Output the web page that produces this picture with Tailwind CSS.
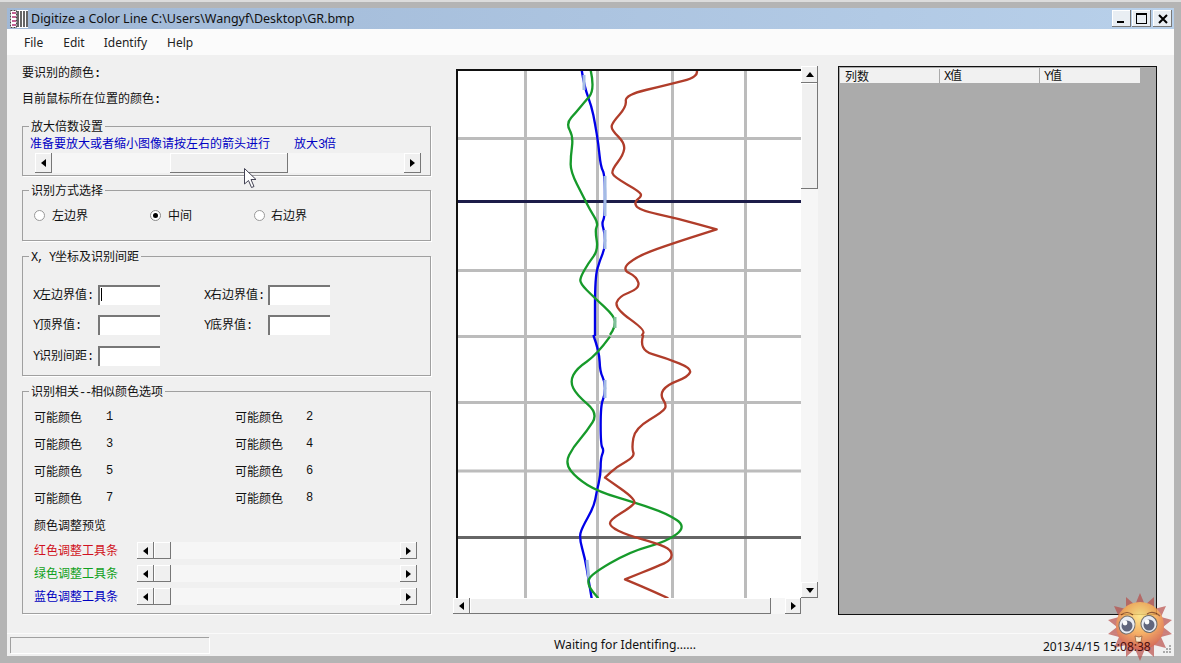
<!DOCTYPE html>
<html>
<head>
<meta charset="utf-8">
<script src="https://cdn.jsdelivr.net/npm/@tailwindcss/browser@4"></script>
</head>
<body class="overflow-hidden">
<div class="relative w-[1181px] h-[663px] bg-[#b4b4b4] border-t-2 border-[#dcdcdc] pt-[6px] pb-[7px] px-[7px] flex flex-col font-['Noto_Sans_CJK_SC',sans-serif] text-[12px] leading-[14px] text-[#111]">

  <!-- title bar -->
  <div class="h-[21px] shrink-0 bg-gradient-to-r from-[#a0b8d6] to-[#b8d0ea] flex items-center pl-[3px] pr-[2px]">
    <svg width="18" height="18" viewBox="0 0 18 18" class="bg-white shrink-0">
      <rect x="0.5" y="0.5" width="6" height="17" fill="#fff" stroke="#444" stroke-dasharray="2 1"/>
      <path d="M2 3h4M2 7h4M2 11h4M2 15h4" stroke="#b03070" stroke-width="1.4"/>
      <path d="M8 1v16M11 1v16M14 1v16M17 1v16" stroke="#000" stroke-width="1.2"/>
    </svg>
    <span class="ml-[3px] font-['Noto_Sans',sans-serif] text-[12.5px] text-[#111]">Digitize a Color Line C:\Users\Wangyf\Desktop\GR.bmp</span>
    <div class="ml-auto flex gap-[1px]">
      <div class="w-[19px] h-[17px] bg-[#e9eef3] shadow-[inset_-1px_-1px_0_#777,inset_1px_1px_0_#fff] flex items-center justify-center pt-[6px] pr-[2px]"><div class="w-[7px] h-[2px] bg-black"></div></div>
      <div class="w-[19px] h-[17px] bg-[#e9eef3] shadow-[inset_-1px_-1px_0_#777,inset_1px_1px_0_#fff] flex items-center justify-center pr-[1px]"><div class="w-[11px] h-[11px] border border-black border-t-2"></div></div>
      <div class="w-[19px] h-[17px] ml-[1px] bg-[#e9eef3] shadow-[inset_-1px_-1px_0_#777,inset_1px_1px_0_#fff] flex items-center justify-center"><svg width="10" height="10" viewBox="0 0 10 10"><path d="M1 1l8 8M9 1l-8 8" stroke="#000" stroke-width="2"/></svg></div>
    </div>
  </div>

  <!-- menu -->
  <div class="h-[26px] shrink-0 bg-[#fbfbfb] flex items-center pt-[2px] font-['Noto_Sans',sans-serif] text-[12px] text-[#222]">
    <span class="ml-[17px]">File</span><span class="ml-[20px]">Edit</span><span class="ml-[19px]">Identify</span><span class="ml-[20px]">Help</span>
  </div>

  <!-- main -->
  <div class="flex-1 bg-[#f0f0f0] flex">

    <!-- left column -->
    <div class="w-[424px] pl-[15px] pt-[10px] shrink-0">
      <div class="h-[14px]">要识别的颜色<span class="font-['Liberation_Mono',monospace] text-[12px] tracking-[-1.2px] font-bold">:</span></div>
      <div class="h-[14px] mt-[12px]">目前鼠标所在位置的颜色<span class="font-['Liberation_Mono',monospace] text-[12px] tracking-[-1.2px] font-bold">:</span></div>

      <!-- box 1 -->
      <div class="relative mt-[21px] h-[50px] border border-[#a0a0a0] shadow-[1px_1px_0_#fff]">
        <div class="absolute left-[6px] top-[-8px] px-[2px] bg-[#f0f0f0]">放大倍数设置</div>
        <div class="flex pl-[7px] pt-[9px] h-[26px] text-[#0000c4]"><span class="w-[264px]">准备要放大或者缩小图像请按左右的箭头进行</span><span>放大<span class="font-['Liberation_Mono',monospace] text-[12px] tracking-[-1.2px]">3</span>倍</span></div>
        <div class="flex ml-[12px] w-[386px] h-[20px] bg-[#f6f6f6]">
          <div class="w-[17px] bg-[#f0f0f0] shadow-[inset_-1px_-1px_0_#777,inset_1px_1px_0_#fff] flex items-center justify-center"><svg width="5" height="8"><path d="M5 0v8L0 4z" fill="#000"/></svg></div>
          <div class="w-[118px] ml-[118px] bg-[#f0f0f0] shadow-[inset_-1px_-1px_0_#777,inset_1px_1px_0_#fff]"></div>
          <div class="w-[17px] ml-auto bg-[#f0f0f0] shadow-[inset_-1px_-1px_0_#777,inset_1px_1px_0_#fff] flex items-center justify-center"><svg width="5" height="8"><path d="M0 0v8L5 4z" fill="#000"/></svg></div>
        </div>
      </div>

      <!-- box 2 -->
      <div class="relative mt-[14px] h-[51px] border border-[#a0a0a0] shadow-[1px_1px_0_#fff]">
        <div class="absolute left-[6px] top-[-8px] px-[2px] bg-[#f0f0f0]">识别方式选择</div>
        <div class="flex items-center h-[14px] mt-[17px] pl-[11px]">
          <div class="w-[11px] h-[11px] rounded-full bg-white border border-[#999] shrink-0"></div>
          <span class="ml-[7px] w-[98px]">左边界</span>
          <div class="w-[11px] h-[11px] rounded-full bg-white border border-[#888] flex items-center justify-center shrink-0"><div class="w-[5px] h-[5px] rounded-full bg-black"></div></div>
          <span class="ml-[7px] w-[86px]">中间</span>
          <div class="w-[11px] h-[11px] rounded-full bg-white border border-[#999] shrink-0"></div>
          <span class="ml-[6px]">右边界</span>
        </div>
      </div>

      <!-- box 3 -->
      <div class="relative mt-[15px] h-[120px] border border-[#a0a0a0] shadow-[1px_1px_0_#fff]">
        <div class="absolute left-[6px] top-[-8px] px-[2px] bg-[#f0f0f0]"><span class="font-['Liberation_Mono',monospace] text-[12px] tracking-[-1.2px]">X, Y</span>坐标及识别间距</div>
        <div class="grid grid-cols-[65px_62px_44px_64px_62px] pl-[10px] pt-[28px] items-center auto-rows-[20px] gap-y-[10px]">
          <span><span class="font-['Liberation_Mono',monospace] text-[12px] tracking-[-1.2px]">X</span>左边界值<span class="font-['Liberation_Mono',monospace] text-[12px] tracking-[-1.2px]">:</span></span>
          <div class="relative h-[20px] bg-white border-t-2 border-l-2 border-t-[#777] border-l-[#777]"><div class="absolute left-[1px] top-[1px] w-[1px] h-[13px] bg-black"></div></div>
          <span></span>
          <span><span class="font-['Liberation_Mono',monospace] text-[12px] tracking-[-1.2px]">X</span>右边界值<span class="font-['Liberation_Mono',monospace] text-[12px] tracking-[-1.2px]">:</span></span>
          <div class="h-[20px] bg-white border-t-2 border-l-2 border-t-[#777] border-l-[#777]"></div>

          <span><span class="font-['Liberation_Mono',monospace] text-[12px] tracking-[-1.2px]">Y</span>顶界值<span class="font-['Liberation_Mono',monospace] text-[12px] tracking-[-1.2px]">:</span></span>
          <div class="h-[20px] bg-white border-t-2 border-l-2 border-t-[#777] border-l-[#777]"></div>
          <span></span>
          <span><span class="font-['Liberation_Mono',monospace] text-[12px] tracking-[-1.2px]">Y</span>底界值<span class="font-['Liberation_Mono',monospace] text-[12px] tracking-[-1.2px]">:</span></span>
          <div class="h-[20px] bg-white border-t-2 border-l-2 border-t-[#777] border-l-[#777]"></div>

          <span class="mt-[1px]"><span class="font-['Liberation_Mono',monospace] text-[12px] tracking-[-1.2px]">Y</span>识别间距<span class="font-['Liberation_Mono',monospace] text-[12px] tracking-[-1.2px]">:</span></span>
          <div class="h-[20px] mt-[1px] bg-white border-t-2 border-l-2 border-t-[#777] border-l-[#777]"></div>
        </div>
      </div>

      <!-- box 4 -->
      <div class="relative mt-[15px] h-[223px] border border-[#a0a0a0] shadow-[1px_1px_0_#fff]">
        <div class="absolute left-[6px] top-[-8px] px-[2px] bg-[#f0f0f0]">识别相关<span class="font-['Liberation_Mono',monospace] text-[12px] tracking-[-1.2px]">--</span>相似颜色选项</div>
        <div class="grid grid-cols-[72px_129px_71px_1fr] pl-[11px] pt-[18px] auto-rows-[14px] gap-y-[13px] items-center">
          <span>可能颜色</span><span class="font-['Liberation_Mono',monospace] text-[12px]">1</span><span>可能颜色</span><span class="font-['Liberation_Mono',monospace] text-[12px]">2</span>
          <span>可能颜色</span><span class="font-['Liberation_Mono',monospace] text-[12px]">3</span><span>可能颜色</span><span class="font-['Liberation_Mono',monospace] text-[12px]">4</span>
          <span>可能颜色</span><span class="font-['Liberation_Mono',monospace] text-[12px]">5</span><span>可能颜色</span><span class="font-['Liberation_Mono',monospace] text-[12px]">6</span>
          <span>可能颜色</span><span class="font-['Liberation_Mono',monospace] text-[12px]">7</span><span>可能颜色</span><span class="font-['Liberation_Mono',monospace] text-[12px]">8</span>
          <span class="col-span-4">颜色调整预览</span>
        </div>
        <div class="flex flex-col gap-[6px] pl-[11px] mt-[10px]">
          <div class="flex items-center h-[17px]"><span class="w-[103px] pb-[2px] text-[#d01020]">红色调整工具条</span>
            <div class="flex w-[280px] h-[17px] bg-[#f6f6f6]">
              <div class="w-[17px] bg-[#f0f0f0] shadow-[inset_-1px_-1px_0_#777,inset_1px_1px_0_#fff] flex items-center justify-center"><svg width="5" height="8"><path d="M5 0v8L0 4z" fill="#000"/></svg></div>
              <div class="w-[17px] bg-[#f0f0f0] shadow-[inset_-1px_-1px_0_#777,inset_1px_1px_0_#fff]"></div>
              <div class="w-[17px] ml-auto bg-[#f0f0f0] shadow-[inset_-1px_-1px_0_#777,inset_1px_1px_0_#fff] flex items-center justify-center"><svg width="5" height="8"><path d="M0 0v8L5 4z" fill="#000"/></svg></div>
            </div>
          </div>
          <div class="flex items-center h-[17px]"><span class="w-[103px] pb-[2px] text-[#10a020]">绿色调整工具条</span>
            <div class="flex w-[280px] h-[17px] bg-[#f6f6f6]">
              <div class="w-[17px] bg-[#f0f0f0] shadow-[inset_-1px_-1px_0_#777,inset_1px_1px_0_#fff] flex items-center justify-center"><svg width="5" height="8"><path d="M5 0v8L0 4z" fill="#000"/></svg></div>
              <div class="w-[17px] bg-[#f0f0f0] shadow-[inset_-1px_-1px_0_#777,inset_1px_1px_0_#fff]"></div>
              <div class="w-[17px] ml-auto bg-[#f0f0f0] shadow-[inset_-1px_-1px_0_#777,inset_1px_1px_0_#fff] flex items-center justify-center"><svg width="5" height="8"><path d="M0 0v8L5 4z" fill="#000"/></svg></div>
            </div>
          </div>
          <div class="flex items-center h-[17px]"><span class="w-[103px] pb-[2px] text-[#0000c0]">蓝色调整工具条</span>
            <div class="flex w-[280px] h-[17px] bg-[#f6f6f6]">
              <div class="w-[17px] bg-[#f0f0f0] shadow-[inset_-1px_-1px_0_#777,inset_1px_1px_0_#fff] flex items-center justify-center"><svg width="5" height="8"><path d="M5 0v8L0 4z" fill="#000"/></svg></div>
              <div class="w-[17px] bg-[#f0f0f0] shadow-[inset_-1px_-1px_0_#777,inset_1px_1px_0_#fff]"></div>
              <div class="w-[17px] ml-auto bg-[#f0f0f0] shadow-[inset_-1px_-1px_0_#777,inset_1px_1px_0_#fff] flex items-center justify-center"><svg width="5" height="8"><path d="M0 0v8L5 4z" fill="#000"/></svg></div>
            </div>
          </div>
        </div>
      </div>
    </div>

    <!-- chart column -->
    <div class="ml-[22px] w-[365px] shrink-0 pt-[11px]">
      <div class="flex h-[532px]">
        <div class="w-[348px] pl-[3px] pt-[3px]">
          <svg width="345" height="529" viewBox="456 69 345 529" class="block bg-white">
            <defs>
              <filter id="soft" filterUnits="userSpaceOnUse" x="440" y="50" width="380" height="570"><feGaussianBlur stdDeviation="0.65"/></filter>
            </defs>
            <g filter="url(#soft)" fill="none">
              <path d="M525.5 69V598M597.5 69V598M672.5 69V598M745.5 69V598" stroke="#bcbcbc" stroke-width="3"/>
              <path d="M456 138.5H801M456 270.5H801M456 336.5H801M456 402.5H801M456 471H801" stroke="#bcbcbc" stroke-width="3"/>
              <path d="M456 201.5H801" stroke="#1c1c48" stroke-width="3"/>
              <path d="M456 537.5H801" stroke="#666" stroke-width="3"/>
              <g stroke="#0505e8" stroke-width="7" stroke-linejoin="round">
                <path transform="translate(450 60) scale(.3333)" data-pts="395,30 403,80 425,140 435,190 445,250 452,320 465,345 465,470 455,490 465,520 465,565 450,600 435,650 435,828"/>
                <path transform="translate(450 335) scale(.3333)" data-pts="430,0 448,50 450,110 465,140 465,180 452,210 452,330 462,345 452,370 452,420 440,470 432,515 395,580 388,610 405,670 415,730 425,790"/>
              </g>
              <g stroke="#a4bce4" stroke-width="3">
                <path d="M584 75V90M605 176V216M605 230V249M605 380V398M587 560L589 580"/>
              </g>
              <g stroke="#189a2c" stroke-width="7" stroke-linejoin="round">
                <path transform="translate(450 60) scale(.3333)" data-pts="422,30 435,90 400,130 380,155 348,190 370,230 362,290 362,335 400,410 420,450 445,490 435,510 445,570 415,610 392,650 390,670 430,710 495,770 495,800 480,825"/>
                <path transform="translate(450 335) scale(.3333)" data-pts="480,5 440,60 380,100 360,140 380,180 445,235 410,290 370,335 345,385 380,430 445,470 560,505 650,535 710,575 650,620 540,650 420,720 412,750 445,790"/>
              </g>
              <path d="M615 317V328" stroke="#80c09a" stroke-width="3"/>
              <g stroke="#b03c2a" stroke-width="7" stroke-linejoin="round">
                <path transform="translate(450 60) scale(.3333)" data-pts="740,30 748,50 650,75 525,105 530,140 485,190 485,210 525,250 520,285 485,330 490,350 570,395 575,410 552,425 565,450 680,475 800,508 800,508 640,560 560,590 515,628 560,650 570,685 505,710 495,745 585,810 575,828"/>
                <path transform="translate(450 335) scale(.3333)" data-pts="580,0 565,45 650,70 725,100 715,125 650,150 630,180 650,210 640,230 555,280 545,340 555,365 500,395 465,428 465,428 560,495 545,515 480,555 480,575 530,600 620,625 665,645 665,675 620,695 525,733 525,733 600,765 655,790"/>
              </g>
            </g>
            <path d="M457 598V70H801" fill="none" stroke="#111" stroke-width="2"/>
          </svg>
        </div>
        <!-- vertical scrollbar -->
        <div class="w-[17px] flex flex-col bg-[#f6f6f6]">
          <div class="h-[17px] bg-[#f0f0f0] shadow-[inset_-1px_-1px_0_#777,inset_1px_1px_0_#fff] flex items-center justify-center"><svg width="8" height="5"><path d="M0 5h8L4 0z" fill="#000"/></svg></div>
          <div class="h-[106px] bg-[#f0f0f0] shadow-[inset_-1px_-1px_0_#777,inset_1px_1px_0_#fff]"></div>
          <div class="h-[16px] mt-auto bg-[#f0f0f0] shadow-[inset_-1px_-1px_0_#777,inset_1px_1px_0_#fff] flex items-center justify-center"><svg width="8" height="5"><path d="M0 0h8L4 5z" fill="#000"/></svg></div>
        </div>
      </div>
      <!-- horizontal scrollbar -->
      <div class="flex w-[348px] h-[16px] bg-[#f6f6f6]">
        <div class="w-[17px] bg-[#f0f0f0] shadow-[inset_-1px_-1px_0_#777,inset_1px_1px_0_#fff] flex items-center justify-center"><svg width="5" height="8"><path d="M5 0v8L0 4z" fill="#000"/></svg></div>
        <div class="w-[301px] bg-[#f0f0f0] shadow-[inset_-1px_-1px_0_#777,inset_1px_1px_0_#fff]"></div>
        <div class="w-[16px] ml-auto bg-[#f0f0f0] shadow-[inset_-1px_-1px_0_#777,inset_1px_1px_0_#fff] flex items-center justify-center"><svg width="5" height="8"><path d="M0 0v8L5 4z" fill="#000"/></svg></div>
      </div>
    </div>

    <!-- right list -->
    <div class="ml-[20px] mt-[11px] w-[319px] h-[549px] border border-[#111] bg-[#ababab]">
      <div class="ml-[1px] mt-[1px] w-[300px] h-[15px] bg-[#f1f1f1] flex items-center">
        <span class="w-[100px] pl-[5px] border-r border-[#aaa]">列数</span>
        <span class="w-[100px] pl-[4px] border-r border-[#aaa]"><span class="font-['Liberation_Mono',monospace] text-[12px] tracking-[-1.2px]">X</span>值</span>
        <span class="pl-[4px]"><span class="font-['Liberation_Mono',monospace] text-[12px] tracking-[-1.2px]">Y</span>值</span>
      </div>
    </div>
  </div>

  <!-- status bar -->
  <div class="h-[23px] shrink-0 bg-[#f0f0f0] border-t border-[#fafafa] flex items-center relative">
    <div class="ml-[3px] w-[199px] h-[16px] border-t border-l border-[#a0a0a0] bg-[#f0f0f0] shadow-[1px_1px_0_#fff]"></div>
    <span class="absolute left-[547px] top-[4px] font-['Noto_Sans',sans-serif] text-[12.2px]">Waiting for Identifing......</span>
    <div class="absolute right-[3px] bottom-[3px] grid grid-cols-3 gap-[1px]">
      <span></span><span></span><span class="w-[2px] h-[2px] bg-[#aaa]"></span>
      <span></span><span class="w-[2px] h-[2px] bg-[#aaa]"></span><span class="w-[2px] h-[2px] bg-[#aaa]"></span>
      <span class="w-[2px] h-[2px] bg-[#aaa]"></span><span class="w-[2px] h-[2px] bg-[#aaa]"></span><span class="w-[2px] h-[2px] bg-[#aaa]"></span>
    </div>
  </div>

  <!-- mouse pointer -->
  <svg class="absolute left-[243px] top-[165px]" width="15" height="22" viewBox="0 0 15 22">
    <path d="M1.5 1.5V17l4-3.5 3 7 2.5-1-3-7h5z" fill="#fff" stroke="#445" stroke-width="1"/>
  </svg>

  <!-- floating mascot, see-through over the list frame and the clock -->
  <svg class="absolute left-[1105px] top-[589px] opacity-85" width="70" height="72" viewBox="-35 -36 70 72">
    <defs>
      <radialGradient id="sun" cx="0.5" cy="0.3" r="0.75">
        <stop offset="0" stop-color="#ffe680"/>
        <stop offset="0.45" stop-color="#f8a850"/>
        <stop offset="1" stop-color="#c8443c"/>
      </radialGradient>
      <filter id="softer" x="-5%" y="-5%" width="110%" height="110%"><feGaussianBlur stdDeviation="0.4"/></filter>
    </defs>
    <g filter="url(#softer)">
      <polygon fill="#b84a46" fill-opacity="0.8" points="0,-34 5,-22 14,-30 14,-18 26,-21 21,-10 32,-7 23,0 32,7 21,10 26,21 14,18 14,30 5,22 0,34 -5,22 -14,30 -14,18 -26,21 -21,10 -32,7 -23,0 -32,-7 -21,-10 -26,-21 -14,-18 -14,-30 -5,-22"/>
      <circle cx="0" cy="-1" r="24" fill="url(#sun)"/>
      <path d="M-19 -12Q-13 -17 -7 -12M7 -13Q13 -17 20 -11" fill="none" stroke="#8a4a20" stroke-width="1.2"/>
      <ellipse cx="-13" cy="-2" rx="8" ry="9" fill="#e8ecf4" stroke="#555" stroke-width="1" transform="rotate(15 -13 -2)"/>
      <ellipse cx="9" cy="-3" rx="8" ry="8.5" fill="#e8ecf4" stroke="#555" stroke-width="1" transform="rotate(-15 9 -3)"/>
      <circle cx="-13" cy="-1" r="5.5" fill="#48506a"/>
      <circle cx="9" cy="-2" r="5.5" fill="#48506a"/>
      <circle cx="-15" cy="-4" r="2.4" fill="#fff"/>
      <circle cx="7" cy="-5" r="2.4" fill="#fff"/>
      <path d="M-5 9l4 1 3-1-1 6h-5z" fill="#fbe9c8" stroke="#8a4a20" stroke-width="0.8"/>
    </g>
  </svg>

  <!-- clock text, drawn above the mascot -->
  <span class="absolute left-[1043px] top-[638px] font-['Noto_Sans',sans-serif] text-[12px]">2013/4/15 15<span class="text-[#4a0c0c]">:08:38</span></span>
</div>
<script>
  // Round the plotted curves: each sampled point becomes a quadratic control point between midpoints.
  document.querySelectorAll('path[data-pts]').forEach(function (el) {
    var p = el.getAttribute('data-pts').split(' ').map(function (s) { return s.split(',').map(Number); });
    var d = 'M' + p[0].join(' ');
    for (var i = 1; i < p.length - 1; i++) {
      var mx = (p[i][0] + p[i + 1][0]) / 2, my = (p[i][1] + p[i + 1][1]) / 2;
      d += 'Q' + p[i].join(' ') + ' ' + mx + ' ' + my;
    }
    d += 'L' + p[p.length - 1].join(' ');
    el.setAttribute('d', d);
  });
</script>
</body>
</html>
